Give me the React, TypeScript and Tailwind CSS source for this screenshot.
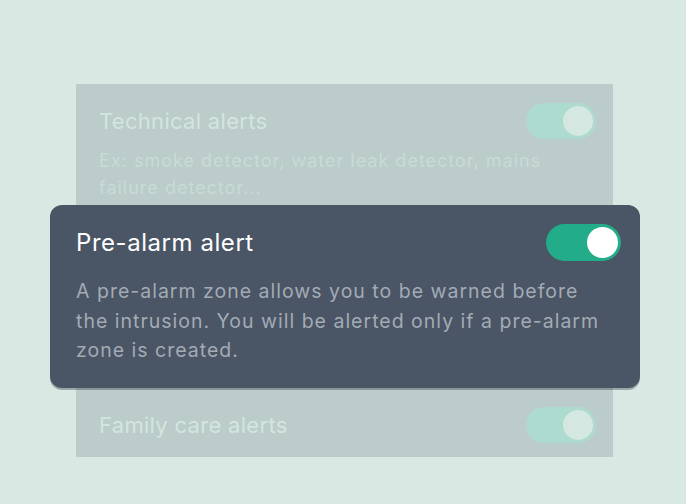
import React from 'react';

function Toggle({ faded }: { faded?: boolean }) {
  if (faded) {
    return (
      <div className="flex h-[36px] w-[70px] shrink-0 items-center justify-end rounded-full bg-[#aedbcf] pr-[3px]">
        <div className="h-[30px] w-[30px] rounded-full bg-[#d4e7e1]" />
      </div>
    );
  }
  return (
    <div className="flex h-[37px] w-[75px] shrink-0 items-center justify-end rounded-full bg-[#23ac89] pr-[3px]">
      <div className="h-[31px] w-[31px] rounded-full bg-white" />
    </div>
  );
}

export default function App() {
  return (
    <div
      className="flex h-[504px] w-[686px] justify-start bg-[#d7e9e2] pt-[84px] pl-[76px]"
      style={{ fontFamily: 'Inter, "Noto Sans", sans-serif' }}
    >
      <div className="flex h-[373px] w-[537px] flex-col bg-[#bbcccb] pt-[19px] pb-[13px]">
        {/* Technical alerts */}
        <div className="flex h-[36px] items-center justify-between pl-[23px] pr-[17px]">
          <span className="text-[22px] leading-[28px] tracking-[0.3px] text-[#d4e5df]">Technical alerts</span>
          <Toggle faded />
        </div>
        <p className="mt-[8px] pl-[23px] pr-[60px] text-[18px] leading-[27px] tracking-[1px] text-[#c9dbd6]">
          Ex: smoke detector, water leak detector, mains failure detector...
        </p>

        {/* Active card */}
        <div className="mt-[4px] -ml-[26px] -mr-[27px] rounded-[12px] bg-[#4a5565] pt-[19px] pr-[19px] pb-[22px] pl-[26px] shadow-[0_2px_0_rgba(40,50,60,0.35)]">
          <div className="flex h-[37px] items-center justify-between">
            <span className="text-[24px] leading-[30px] tracking-[0.55px] text-white">Pre-alarm alert</span>
            <Toggle />
          </div>
          <p className="mt-[16px] whitespace-nowrap text-[19.5px] leading-[29.5px] tracking-[1px] text-[#a3abb5]">
            A pre-alarm zone allows you to be warned before
            <br />
            the intrusion. You will be alerted only if a pre-alarm
            <br />
            zone is created.
          </p>
        </div>

        {/* Family care alerts */}
        <div className="mt-[19px] flex h-[36px] items-center justify-between pl-[23px] pr-[17px]">
          <span className="text-[22px] leading-[28px] tracking-[0.3px] text-[#d4e5df]">Family care alerts</span>
          <Toggle faded />
        </div>
      </div>
    </div>
  );
}
